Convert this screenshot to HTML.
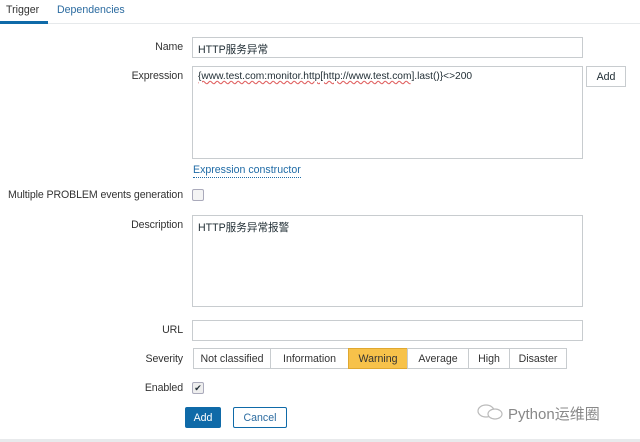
<!DOCTYPE html><html><head><meta charset="utf-8"><style>
body{margin:0;width:640px;height:442px;background:#fff;font-family:"Liberation Sans","Noto Sans CJK SC",sans-serif;font-size:10.6px;color:#1f2c33;position:relative;overflow:hidden}
.a{position:absolute}
.lbl{position:absolute;right:457px;text-align:right;white-space:nowrap;color:#333;letter-spacing:-0.1px}
.inp{position:absolute;border:1px solid #c8cccf;background:#fff;box-sizing:border-box;padding:4px 5px;white-space:nowrap}
.sev{position:absolute;top:348px;height:21px;border:1px solid #c8cccf;box-sizing:border-box;text-align:center;line-height:20px;color:#333;background:#fff}
</style></head><body>
<div class="a" style="left:0;top:23px;width:640px;height:1px;background:#e6e9eb"></div>
<div class="a" style="left:6px;top:4px;color:#333">Trigger</div>
<div class="a" style="left:57px;top:4px;color:#2b6ba0">Dependencies</div>
<div class="a" style="left:0;top:21px;width:48px;height:3px;background:#0f6aa8"></div>
<div class="lbl" style="top:41px">Name</div>
<div class="inp" style="left:192px;top:37px;width:391px;height:21px">HTTP服务异常</div>
<div class="lbl" style="top:70px">Expression</div>
<div class="inp" style="left:192px;top:66px;width:391px;height:93px;font-size:10.2px"><span style="text-decoration:underline wavy #e06060">{www.test.com:monitor.http[http://www.test.com]</span>.last()}&lt;&gt;200</div>
<div class="inp" style="left:586px;top:66px;width:40px;height:21px;text-align:center;padding:4px 0">Add</div>
<div class="a" style="left:193px;top:164px;color:#1f6ba6;border-bottom:1px dotted #1f6ba6;line-height:13px">Expression constructor</div>
<div class="lbl" style="top:189px">Multiple PROBLEM events generation</div>
<div class="a" style="left:192px;top:189px;width:10px;height:10px;border:1px solid #aab;border-radius:2px;background:#f4f4f4"></div>
<div class="lbl" style="top:219px">Description</div>
<div class="inp" style="left:192px;top:215px;width:391px;height:92px">HTTP服务异常报警</div>
<div class="lbl" style="top:324px">URL</div>
<div class="inp" style="left:192px;top:320px;width:391px;height:21px"></div>
<div class="lbl" style="top:353px">Severity</div>
<div class="sev" style="left:193px;width:78px">Not classified</div>
<div class="sev" style="left:270px;width:79px">Information</div>
<div class="sev" style="left:348px;width:60px;background:#f7c24a;border-color:#e0a830">Warning</div>
<div class="sev" style="left:407px;width:62px">Average</div>
<div class="sev" style="left:468px;width:42px">High</div>
<div class="sev" style="left:509px;width:58px">Disaster</div>
<div class="lbl" style="top:382px">Enabled</div>
<div class="a" style="left:192px;top:382px;width:10px;height:10px;border:1px solid #aab;border-radius:2px;background:#eee;font-size:9px;line-height:10px;text-align:center">✔</div>
<div class="a" style="left:185px;top:407px;width:36px;height:21px;background:#0f6aa8;color:#fff;text-align:center;line-height:22px;border-radius:2px">Add</div>
<div class="a" style="left:233px;top:407px;width:54px;height:21px;border:1px solid #0f6aa8;box-sizing:border-box;color:#2b6ba0;text-align:center;line-height:20px;border-radius:2px">Cancel</div>
<svg class="a" style="left:476px;top:402px" width="30" height="20" viewBox="0 0 30 20"><ellipse cx="10" cy="9" rx="8" ry="6" fill="none" stroke="#bbb" stroke-width="1.2"/><ellipse cx="19" cy="12" rx="7" ry="5" fill="#fff" stroke="#bbb" stroke-width="1.2"/></svg>
<div class="a" style="left:508px;top:403px;color:#888;font-size:15px">Python运维圈</div>
<div class="a" style="left:0;top:439px;width:640px;height:3px;background:#e8eaec"></div>
</body></html>
